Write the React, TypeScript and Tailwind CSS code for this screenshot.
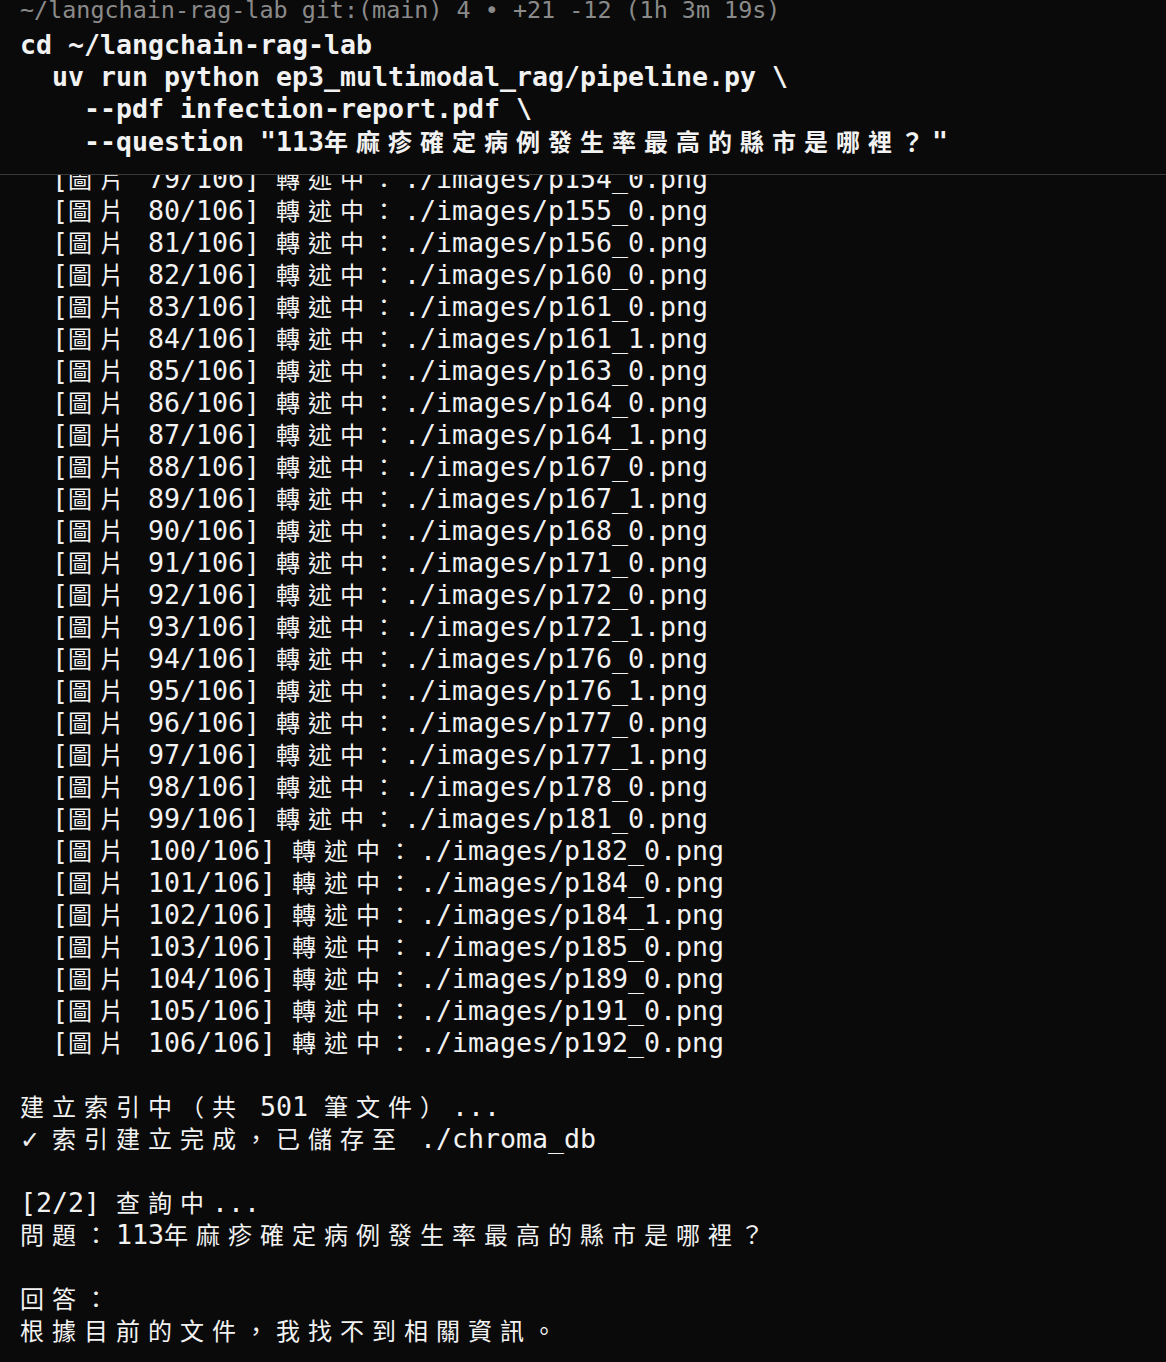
import React from "react";

const WIDE = /[\u1100-\u115F\u2E80-\uA4CF\uAC00-\uD7A3\uF900-\uFAFF\uFE30-\uFE4F\uFF00-\uFF60\uFFE0-\uFFE6]/;

function Line({ text, bold = false }: { text: string; bold?: boolean }) {
  const chars = Array.from(text);
  return (
    <div className={"flex items-baseline h-[32px] leading-[32px] whitespace-pre text-[#f2f2f2] " + (bold ? "font-bold" : "font-normal")}>
      {chars.map((c, i) =>
        WIDE.test(c) ? (
          <span key={i} className="inline-block w-[32px] shrink-0 text-[24px] font-['Noto_Sans_CJK_TC','Noto_Sans_CJK_SC',sans-serif]">
            {c}
          </span>
        ) : c === "✓" ? (
          <span key={i} className="inline-block w-[16px] shrink-0 text-[24px] font-bold font-['DejaVu_Sans',sans-serif]">
            {c}
          </span>
        ) : (
          <span key={i} className="inline-block w-[16px] shrink-0 text-[26.6px] font-['DejaVu_Sans_Mono',monospace]">
            {c}
          </span>
        )
      )}
    </div>
  );
}

const images: [number, string][] = [
  [79, "p154_0"],
  [80, "p155_0"],
  [81, "p156_0"],
  [82, "p160_0"],
  [83, "p161_0"],
  [84, "p161_1"],
  [85, "p163_0"],
  [86, "p164_0"],
  [87, "p164_1"],
  [88, "p167_0"],
  [89, "p167_1"],
  [90, "p168_0"],
  [91, "p171_0"],
  [92, "p172_0"],
  [93, "p172_1"],
  [94, "p176_0"],
  [95, "p176_1"],
  [96, "p177_0"],
  [97, "p177_1"],
  [98, "p178_0"],
  [99, "p181_0"],
  [100, "p182_0"],
  [101, "p184_0"],
  [102, "p184_1"],
  [103, "p185_0"],
  [104, "p189_0"],
  [105, "p191_0"],
  [106, "p192_0"],
];

export default function App() {
  return (
    <div className="w-full h-[1362px] bg-[#0a0a0a] overflow-hidden flex flex-col">
      <div className="h-[175px] shrink-0 border-b border-[#3a3a3a] overflow-hidden px-[20px]">
        <div className="mt-[-6px] h-[32px] leading-[32px] whitespace-pre text-[23.4px] text-[#8a8a8a] font-['DejaVu_Sans_Mono',monospace]">
          ~/langchain-rag-lab git:(main) 4 • +21 -12 (1h 3m 19s)
        </div>
        <div className="mt-[3px]">
          <Line bold text="cd ~/langchain-rag-lab" />
          <Line bold text="  uv run python ep3_multimodal_rag/pipeline.py \" />
          <Line bold text="    --pdf infection-report.pdf \" />
          <Line bold text={'    --question "113年麻疹確定病例發生率最高的縣市是哪裡？"'} />
        </div>
      </div>
      <div className="flex-1 overflow-hidden px-[20px]">
        <div className="mt-[-13px]">
          {images.map(([n, f]) => (
            <Line key={n} text={`  [圖片 ${n}/106] 轉述中：./images/${f}.png`} />
          ))}
          <Line text=" " />
          <Line text="建立索引中（共 501 筆文件）..." />
          <Line text="✓ 索引建立完成，已儲存至 ./chroma_db" />
          <Line text=" " />
          <Line text="[2/2] 查詢中..." />
          <Line text="問題：113年麻疹確定病例發生率最高的縣市是哪裡？" />
          <Line text=" " />
          <Line text="回答：" />
          <Line text="根據目前的文件，我找不到相關資訊。" />
        </div>
      </div>
    </div>
  );
}
